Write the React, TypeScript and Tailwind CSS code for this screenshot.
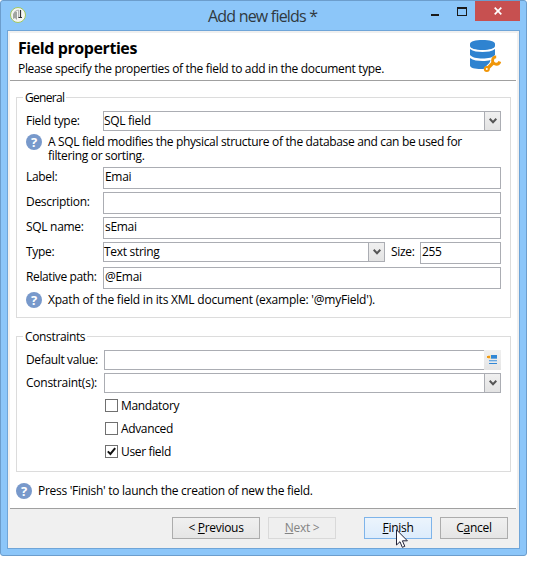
import React from "react";

function HelpIcon() {
  return (
    <span className="flex h-4 w-4 shrink-0 items-center justify-center rounded-full bg-[#7899cb] text-[13px] leading-4 font-bold text-white">
      ?
    </span>
  );
}

function Chevron() {
  return (
    <span className="flex h-full w-4 shrink-0 items-center justify-center border-l border-[#abadb3] bg-linear-to-b from-[#f0f0f0] to-[#e3e3e3]">
      <svg width="8" height="6" viewBox="0 0 8 6" fill="none">
        <path d="M0.7 0.8L4 4.2L7.3 0.8" stroke="#555" strokeWidth="2" />
      </svg>
    </span>
  );
}

function Combo({ value = "", className = "" }: { value?: string; className?: string }) {
  return (
    <div className={`flex h-5 border border-[#abadb3] bg-white ${className}`}>
      <span className="min-w-0 flex-1 leading-[18px]">{value}</span>
      <Chevron />
    </div>
  );
}

function Field({ value = "", className = "" }: { value?: string; className?: string }) {
  return (
    <div className={`h-[22px] border border-[#abadb3] bg-white pl-[1px] leading-[18px] ${className}`}>{value}</div>
  );
}

function Row({ label, children, className = "" }: { label: React.ReactNode; children: React.ReactNode; className?: string }) {
  return (
    <div className={`flex items-start ${className}`}>
      <span className="w-[77px] shrink-0 leading-[19px] whitespace-nowrap">{label}</span>
      {children}
    </div>
  );
}

function Group({ title, className = "", children }: { title: React.ReactNode; className?: string; children: React.ReactNode }) {
  return (
    <section className={`ml-1.5 w-[495px] border border-[#dcdcdc] pr-[9px] pl-[9px] ${className}`}>
      <h2 className="-mt-2 -ml-[3px] h-4 w-fit bg-white px-0.5 leading-4">{title}</h2>
      {children}
    </section>
  );
}

function Check({ label, checked = false }: { label: React.ReactNode; checked?: boolean }) {
  return (
    <div className="ml-[79px] flex h-[23px] items-start">
      <span className="flex h-[13px] w-[13px] items-center justify-center border border-[#707070] bg-white">
        {checked && (
          <svg width="9" height="9" viewBox="0 0 9 9" fill="none">
            <path d="M0.8 4.4L3.4 7L8.2 1.2" stroke="#111" strokeWidth="2" />
          </svg>
        )}
      </span>
      <span className="ml-[3px] leading-[14px] tracking-[-0.35px]">{label}</span>
    </div>
  );
}

function DatabaseIcon() {
  return (
    <svg width="32" height="34" viewBox="0 0 32 34">
      <path d="M0 5C0 2.4 5.6 1 12.5 1S25 2.4 25 5v2c0 2.4-5.6 4-12.5 4S0 9.4 0 7z" fill="#2f83d0" />
      <path d="M0 10c3 2.4 8 3 12.5 3S22 12.4 25 10v6c-2 2.4-7 3.5-12.5 3.5S2 18.4 0 16z" fill="#2f83d0" />
      <path d="M0 19c3 2.4 8 3 12.5 3 3 0 6-.3 8-1l-1 3-6 6c-7 .4-13.5-.8-13.5-3.5z" fill="#2f83d0" />
      <path d="M17 30.5L24 23.5" stroke="#fff" strokeWidth="6" />
      <path d="M17.5 29.5L24 23" stroke="#f09609" strokeWidth="3.4" />
      <path d="M26.2 17.800a3.700 3.700 0 1 0 3.600 4.700" stroke="#f09609" strokeWidth="2.8" fill="none" />
      <circle cx="16.8" cy="30" r="2" fill="#fff" stroke="#f09609" strokeWidth="2" />
    </svg>
  );
}

function Button({ children, className }: { children: React.ReactNode; className: string }) {
  return (
    <button className={`flex h-[22px] items-center justify-center border leading-5 whitespace-pre ${className}`}>
      {children}
    </button>
  );
}

export default function App() {
  return (
    <div className="h-[572px] w-[543px] overflow-hidden bg-white font-['Open_Sans','Noto_Sans',sans-serif] text-[12px] tracking-[-0.3px] text-black">
      <div className="flex h-[556px] w-[527px] flex-col rounded-[3px] border border-[#6c9dcc] bg-[#8cc6f9] px-1.5 pb-1.5">
        <header className="flex h-[29px] shrink-0 items-start">
          <svg className="mt-[5px] ml-[2px]" width="18" height="18" viewBox="0 0 18 18">
            <circle cx="9" cy="9" r="7.5" fill="#f4f5f2" stroke="#a3c85f" />
            <path d="M4 8l2-3 2 1v8l-2-2-2 1z" fill="#a2a5a2" />
            <path d="M6.5 5l3-1v8" stroke="#b5b5b5" fill="none" />
            <path d="M11.5 4v8M9.500 11.500h3.500" stroke="#333" fill="none" strokeWidth="1.2" />
          </svg>
          <h1 className="ml-[181px] w-[114px] text-[16px] leading-[31px] tracking-[-0.8px] whitespace-nowrap text-[#303940]">Add new fields *</h1>
          <span className="mt-[13px] ml-[109px] h-[2px] w-2 bg-[#1a1a1a]" />
          <span className="mt-[6px] ml-[18px] h-[9px] w-[10px] border border-t-2 border-[#1a1a1a]" />
          <span className="ml-2 flex h-5 w-[45px] items-center justify-center bg-[#c75050]">
            <svg width="8" height="8" viewBox="0 0 8 8">
              <path d="M0.7 0.7L7.3 7.3M7.3 0.7L0.7 7.3" stroke="#fff" strokeWidth="1.7" />
            </svg>
          </span>
        </header>

        <main className="flex flex-1 flex-col border border-[#6fa5d8] bg-[#f0f0f0] px-0.5 pt-0.5">
          <div className="flex h-[476px] flex-col bg-white">
            <div className="flex h-[48px] w-[506px] shrink-0 justify-between border-b border-[#a0a0a0] pl-2">
              <div>
                <h2 className="mt-[5px] h-5 text-[16px] leading-5 font-bold tracking-[-0.42px] whitespace-nowrap">Field properties</h2>
                <p className="mt-[3px] leading-4 tracking-[-0.32px] whitespace-nowrap">Please specify the properties of the field to add in the document type.</p>
              </div>
              <div className="mt-[6px] mr-[14px]"><DatabaseIcon /></div>
            </div>

            <Group title={<span className="tracking-[-0.7px]">General</span>} className="mt-4 h-[221px] shrink-0">
              <Row label="Field type:" className="mt-[5px] h-[23px]"><Combo value="SQL field" className="w-[398px]" /></Row>
              <div className="flex h-[33px] items-start">
                <HelpIcon />
                <div className="ml-1.5 pt-[1px] leading-[14px] tracking-[-0.33px] whitespace-nowrap">
                  <p>A SQL field modifies the physical structure of the database and can be used for</p>
                  <p>filtering or sorting.</p>
                </div>
              </div>
              <Row label="Label:" className="h-[25px]"><Field value="Emai" className="w-[398px]" /></Row>
              <Row label="Description:" className="h-[25px]"><Field className="w-[398px]" /></Row>
              <Row label="SQL name:" className="h-[25px]"><Field value="sEmai" className="w-[398px]" /></Row>
              <Row label="Type:" className="h-[25px]">
                <Combo value="Text string" className="w-[282px]" />
                <span className="ml-1.5 w-[29px] leading-5">Size:</span>
                <Field value="255" className="w-[81px]" />
              </Row>
              <Row label={<span className="tracking-[-0.38px]">Relative path:</span>} className="h-[25px]"><Field value="@Emai" className="w-[398px]" /></Row>
              <div className="flex items-start">
                <HelpIcon />
                <p className="ml-1.5 leading-4 tracking-[-0.21px] whitespace-nowrap">Xpath of the field in its XML document (example: '@myField').</p>
              </div>
            </Group>

            <Group title={<span className="tracking-[-0.35px]">Constraints</span>} className="mt-[18px] h-[136px] shrink-0">
              <Row label={<span className="tracking-[-0.36px]">Default value:</span>} className="mt-[5px] h-[23px]">
                <div className="ml-px flex h-5 w-[397px] justify-between">
                  <span className="flex-1 border border-r-0 border-[#abadb3]" />
                  <span className="w-[17px] bg-linear-to-b from-[#f0f0f0] to-[#e5e5e5] pt-[5px] pl-[3px]">
                    <svg width="11" height="10" viewBox="0 0 11 10">
                      <path d="M4 0h6v3H4z" fill="#3086d5" />
                      <path d="M2 3h8v1H2zM2 5h8v1H2z" fill="#6ba8df" />
                      <path d="M2 6h8v1H2z" fill="#b7d5ef" />
                      <path d="M2 8h8v1H2z" fill="#3086d5" />
                      <path d="M1 0h3v4H1z" fill="#f8dca8" />
                      <path d="M0 1h3v2H0z" fill="#f09b18" />
                    </svg>
                  </span>
                </div>
              </Row>
              <Row label={<span className="tracking-[-0.25px]">Constraint(s):</span>} className="h-[26px]"><Combo className="ml-px w-[397px]" /></Row>
              <Check label="Mandatory" />
              <Check label="Advanced" />
              <Check label="User field" checked />
            </Group>

            <div className="mt-[11px] ml-1.5 flex h-4 shrink-0">
              <HelpIcon />
              <p className="ml-1.5 leading-4 tracking-[-0.28px] whitespace-nowrap">Press 'Finish' to launch the creation of new the field.</p>
            </div>
            <div className="mt-[9px] h-px w-[506px] shrink-0 bg-[#a0a0a0]" />
          </div>

          <footer className="mt-[8px] flex pl-[162px]">
            <Button className="w-[88px] border-[#acacac] bg-linear-to-b from-[#f0f0f0] to-[#e5e5e5]">{"< "}<u>P</u>revious</Button>
            <Button className="ml-2 w-[68px] border-[#d9d9d9] bg-[#efefef] text-[#838383]"><u>N</u>{"ext >"}</Button>
            <div className="relative ml-7">
              <Button className="w-[68px] border-[#7eb4ea] bg-linear-to-b from-[#ecf4fc] to-[#dcecfc]"><u>F</u>inish</Button>
              <svg className="absolute top-[12px] left-[32px]" width="13" height="20" viewBox="0 0 13 20">
                <path d="M0.5 0.8v15.2l3.5-3.3 2.3 5.6 2.5-1-2.4-5.5h5z" fill="#fff" stroke="#222238" />
              </svg>
            </div>
            <Button className="ml-2 w-[68px] border-[#acacac] bg-linear-to-b from-[#f0f0f0] to-[#e5e5e5]">C<u>a</u>ncel</Button>
          </footer>
        </main>
      </div>
    </div>
  );
}
